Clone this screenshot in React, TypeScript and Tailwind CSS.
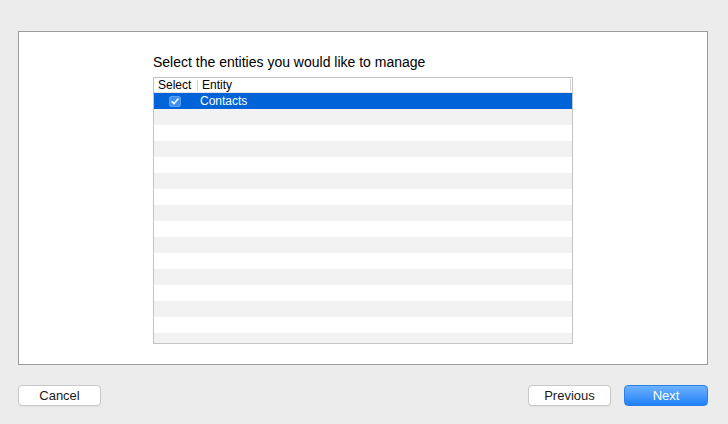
import React from "react";

const ROWS = 16;

function Check() {
  return (
    <span className="flex h-[11px] w-[12px] items-center justify-center rounded-[3px] bg-[#3d8ff5] shadow-[inset_0_0_0_1px_#5aa0f7]">
      <svg width="8" height="7" viewBox="0 0 8 7" fill="none">
        <path d="M1 3.6 L3 5.6 L7 1" stroke="white" strokeWidth="1.5" strokeLinecap="round" strokeLinejoin="round" />
      </svg>
    </span>
  );
}

function EntityTable() {
  return (
    <div className="h-[267px] w-[420px] overflow-hidden border border-[#c3c3c3] bg-white">
      {/* Header */}
      <div className="flex h-[15px] items-center border-b border-[#e2e2e2] text-[12px] leading-none text-black">
        <div className="w-[43px] pl-[4px]">Select</div>
        <div className="h-[11px] w-px bg-[#d4d4d4]" />
        <div className="flex-1 pl-[4px]">Entity</div>
        <div className="mr-[1px] h-[12px] w-px bg-[#d4d4d4]" />
      </div>
      {/* Rows */}
      {Array.from({ length: ROWS }).map((_, i) =>
        i === 0 ? (
          <div key={i} className="flex h-[16px] items-center bg-[#0064d8] text-[12px] text-white">
            <div className="flex w-[42px] justify-center">
              <Check />
            </div>
            <div className="pl-[4px]">Contacts</div>
          </div>
        ) : (
          <div key={i} className={i % 2 === 1 ? "h-[16px] bg-[#f2f2f2]" : "h-[16px] bg-white"} />
        )
      )}
    </div>
  );
}

function Button({ label, primary }: { label: string; primary?: boolean }) {
  return (
    <button
      type="button"
      className={
        primary
          ? "flex h-[21px] w-[84px] items-center justify-center rounded-[4px] border border-[#2c7fe9] bg-gradient-to-b from-[#6cb2ff] to-[#1b7ff7] text-[13px] text-white"
          : "flex h-[21px] w-[83px] items-center justify-center rounded-[4px] border border-[#c8c8c8] bg-white text-[13px] text-[#1a1a1a] shadow-[0_1px_0_rgba(0,0,0,0.05)]"
      }
    >
      {label}
    </button>
  );
}

export default function App() {
  return (
    <div
      className="flex h-[424px] w-[728px] flex-col bg-[#ececec] pl-[18px] pr-[20px] pt-[31px]"
      style={{ fontFamily: '"Liberation Sans", Arial, sans-serif' }}
    >
      <div className="h-[334px] border border-[#9b9b9b] bg-white pl-[134px] pt-[22px]">
        <div className="mb-[7px] h-[16px] text-[14px] leading-[16px] text-black">
          Select the entities you would like to manage
        </div>
        <EntityTable />
      </div>

      <div className="mt-[20px] flex items-center">
        <Button label="Cancel" />
        <div className="flex-1" />
        <Button label="Previous" />
        <div className="w-[13px]" />
        <Button label="Next" primary />
      </div>
    </div>
  );
}
